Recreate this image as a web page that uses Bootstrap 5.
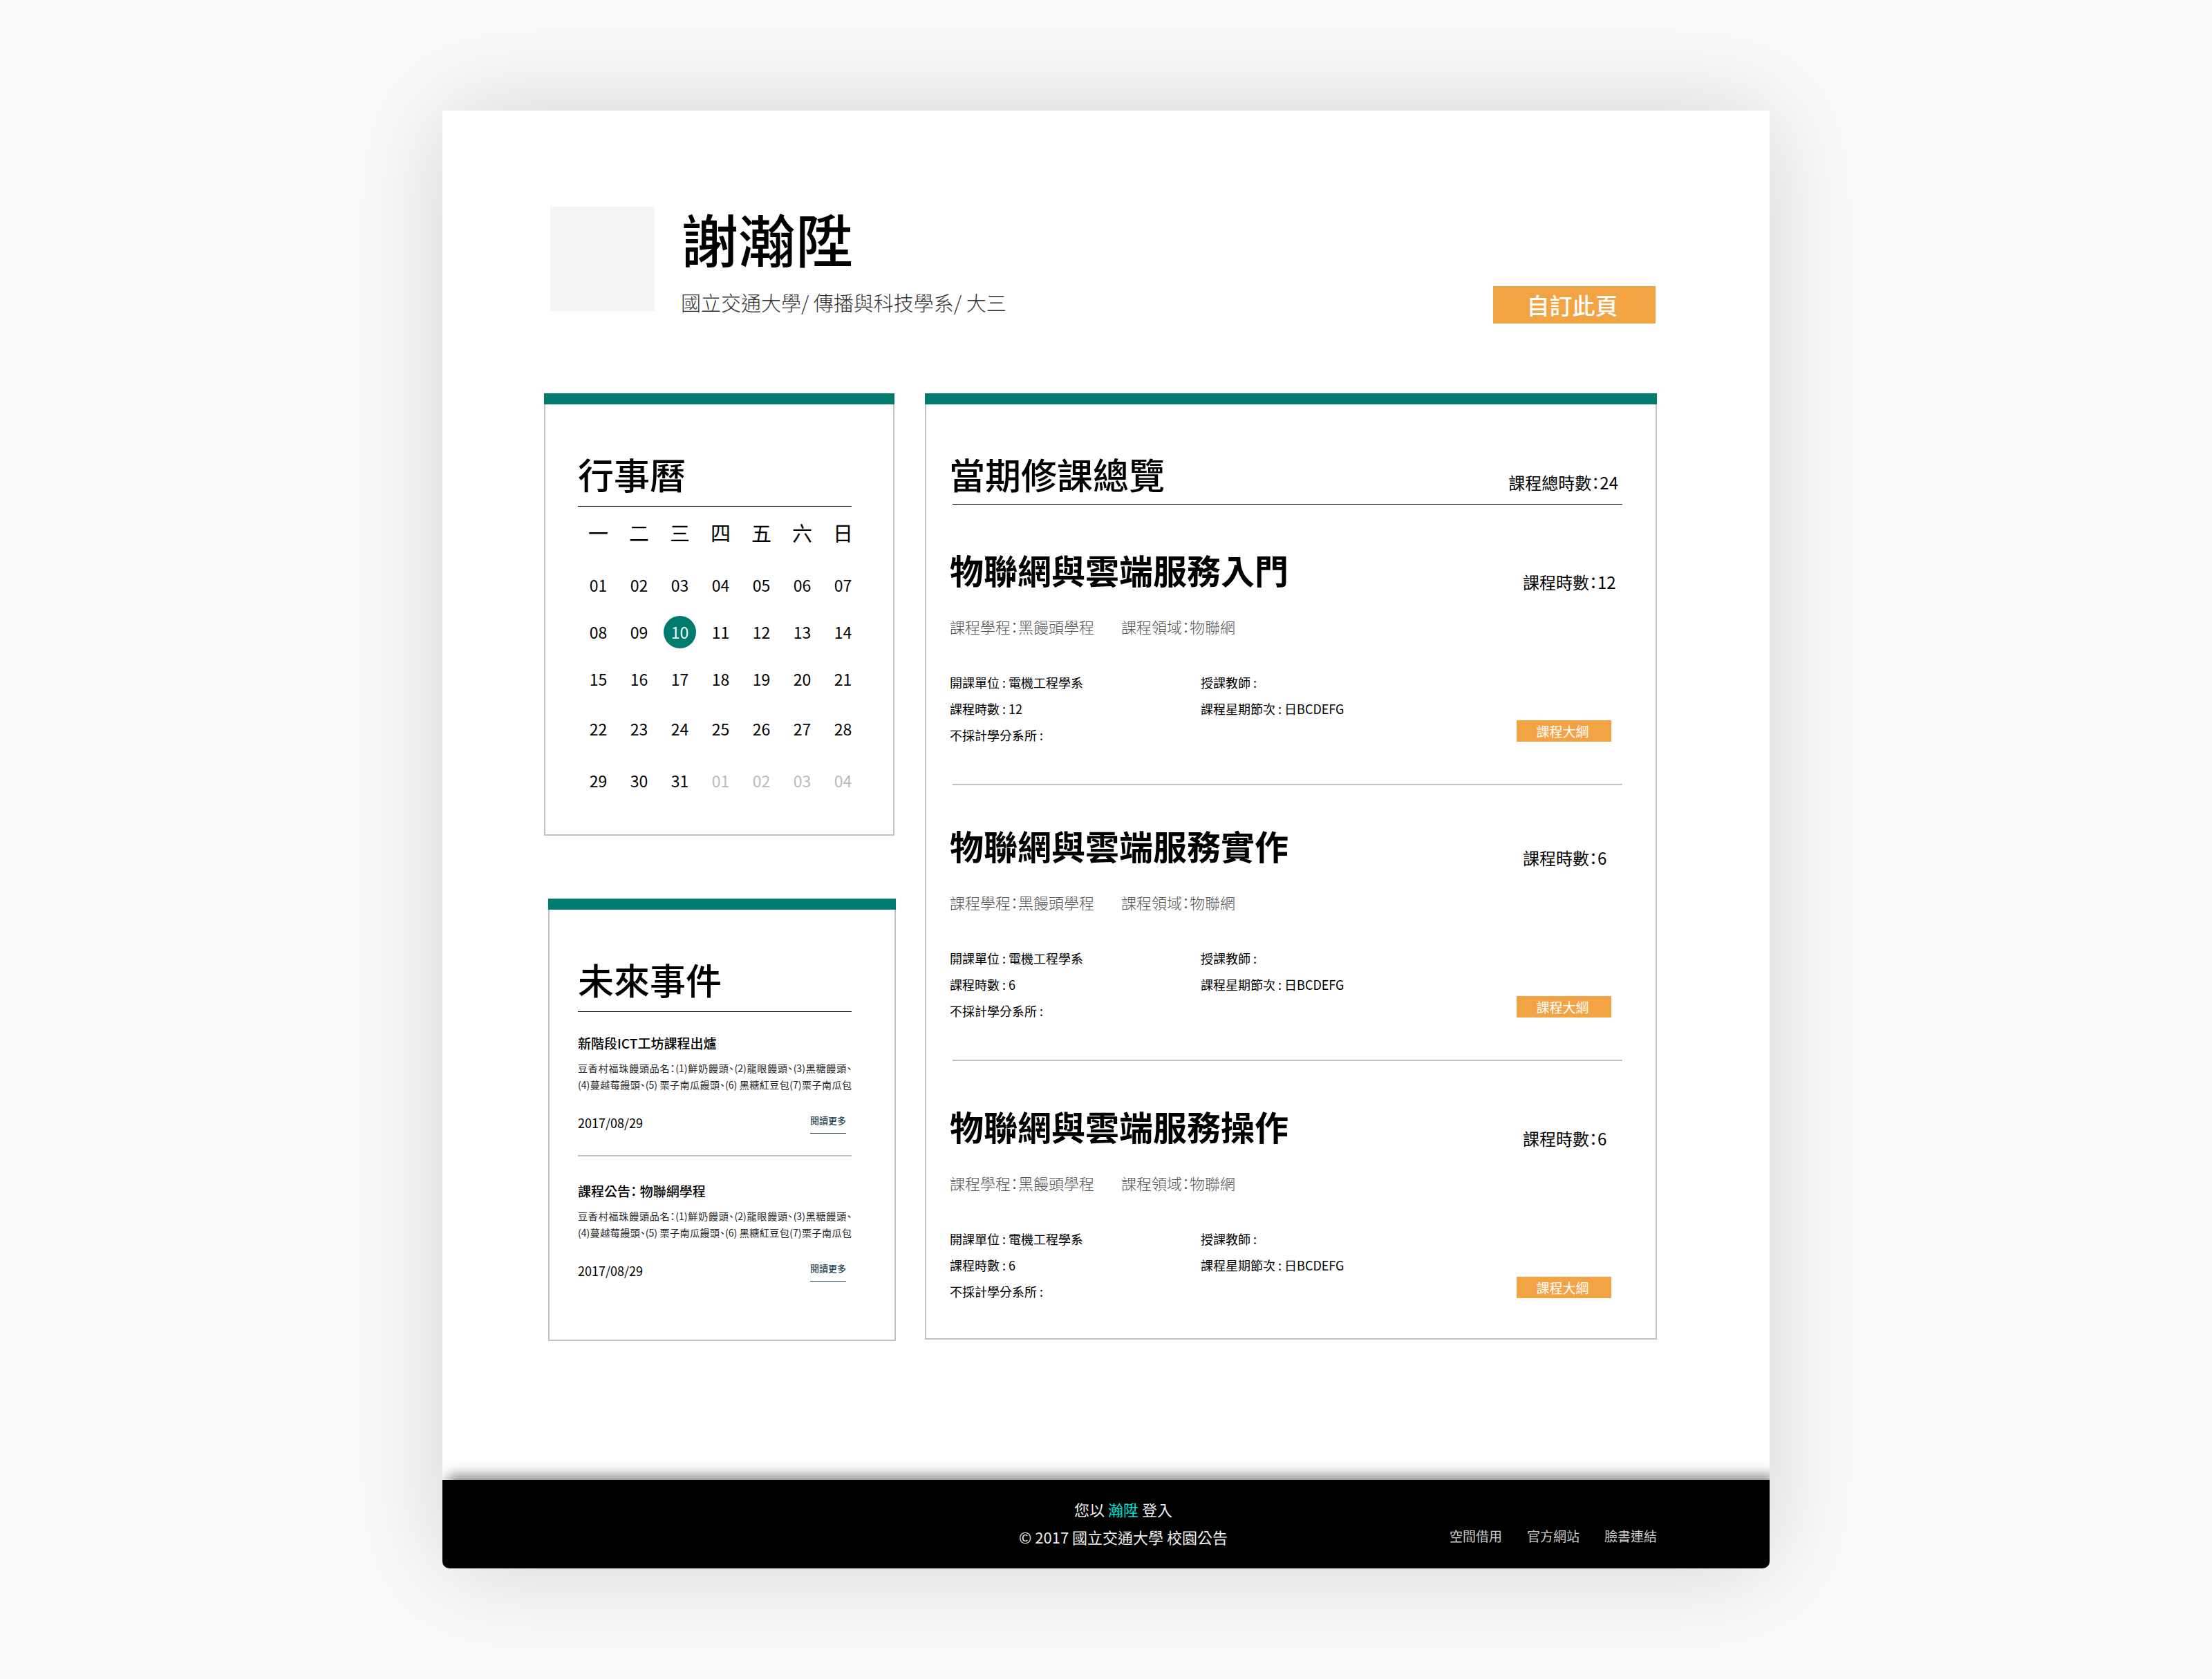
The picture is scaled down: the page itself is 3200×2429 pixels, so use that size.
<!DOCTYPE html>
<html lang="zh-Hant">
<head>
<meta charset="utf-8">
<meta name="viewport" content="width=device-width, initial-scale=1">
<title>校園公告</title>
<link rel="stylesheet" href="https://cdn.jsdelivr.net/npm/bootstrap@5.3.0/dist/css/bootstrap.min.css">
<style>
  :root { --teal: #007b6e; --amber: #f2a444; --hair: #c2c2c2; }
  body { background: #fafafa; color: #000; padding: 160px 20%; font-family: "Noto Sans CJK TC", "Noto Sans", sans-serif; font-feature-settings: "palt"; }
  .sheet { background: #fff; border-radius: 0 0 10px 10px; box-shadow: 0 0 150px rgba(0,0,0,.16); overflow: hidden; }
  .sheet-main { padding: 139px 163px 201px 147px; }
  .profile { padding: 0 2px 0 9px; gap: 38px; }
  .avatar { width: 151px; height: 151px; background: #f4f4f4; }
  .person { font-size: 83px; line-height: 90px; font-weight: 500; }
  .school { font-size: 29px; line-height: 40px; color: #333; margin-top: 28px; font-weight: 300; }
  .btn-amber { --bs-btn-color: #fff; --bs-btn-bg: var(--amber); --bs-btn-hover-color: #fff; --bs-btn-hover-bg: #e3922e; --bs-btn-active-bg: #e3922e; --bs-btn-border-radius: 0; --bs-btn-border-width: 0; }
  .btn-page { width: 235px; height: 54px; font-size: 33px; line-height: 52px; padding: 0 6px 0 0; margin-bottom: -11px; font-weight: 500; }
  .btn-syllabus { width: 137px; height: 31px; font-size: 19px; line-height: 31px; padding: 0 4px 0 0; }
  .boards { margin-top: 112px; gap: 42px; }
  .board-side { flex: 0 0 509px; min-width: 0; }
  .board-main { flex: 1 1 0; }
  /* the coloured bar sits on top of the bordered box, over its full width */
  .panel { background: #fff; border: 2px solid var(--hair); border-top: 0; margin-top: 16px; box-shadow: 0 -16px 0 var(--teal); }
  .panel-title { font-size: 52px; line-height: 60px; font-weight: 500; margin: 0; }
  .cal { width: 507px; height: 624px; padding: 71px 60px 0 47px; }
  .panel-head { border-bottom: 1px solid #111; padding-bottom: 16px; }
  .cal-wrap { margin-right: -17px; }
  .cal table { width: 100%; table-layout: fixed; text-align: center; font-size: 23px; line-height: 30px; }
  .cal th { font-size: 29px; font-weight: 400; height: 79px; padding: 0 0 5px; }
  .cal td { height: 68px; padding: 0; vertical-align: middle; }
  .cal .late td { height: 75px; }
  .cal .off { color: #bbb; }
  .today { display: flex; width: 47px; height: 47px; margin: auto; border-radius: 50%; background: var(--teal); color: #fff; align-items: center; justify-content: center; }
  .events { margin: 107px 0 0 6px; height: 624px; padding: 71px 62px 0 41px; }
  .event { padding-top: 31px; border-bottom: 2px solid var(--hair); height: 209px; }
  .event + .event { border-bottom: 0; margin-top: 5px; }
  .event h3 { font-size: 19px; line-height: 28px; font-weight: 500; margin: 0 0 10px; }
  .event p { font-size: 14px; line-height: 24px; margin: 0; color: #222; text-align: justify; text-align-last: justify; }
  .event-foot { margin-top: 28px; }
  .event time { font-size: 18px; line-height: 30px; }
  .more { font-size: 13px; line-height: 24px; font-weight: 500; color: #1f4353; text-decoration: none; border-bottom: 1px solid #1f4353; padding-bottom: 6px; margin-right: 8px; }
  .courses { padding: 71px 48px 0 36px; height: 1353px; }
  .courses-head { border-bottom: 1px solid #111; margin-left: 2px; padding-bottom: 13px; }
  .courses-head h2 { margin-left: -5px; }
  .total, .hours { font-size: 24px; line-height: 32px; }
  .total { padding: 0 6px 2px 0; }
  .course { border-bottom: 2px solid var(--hair); margin-left: 2px; height: 406px; padding-top: 64px; }
  .course + .course { height: 399px; padding-top: 57px; }
  .course + .course:last-child { border-bottom: 0; padding-top: 64px; }
  .course-body { margin-left: -4px; }
  .course h3 { font-size: 49px; line-height: 60px; font-weight: 700; margin: 0; }
  .fields { font-size: 22px; line-height: 30px; color: #555; gap: 39px; margin-top: 37px; font-weight: 300; }
  .facts { font-size: 18px; line-height: 38px; margin-top: 47px; }
  .facts-a { width: 363px; }
  .aside-col { width: 153px; padding-top: 32px; }
  .aside-col .hours { padding-left: 9px; margin-bottom: 184px; }
  .foot { position: relative; background: #000; color: #ececec; height: 128px; padding: 22px 163px 0; box-shadow: 8px -6px 18px rgba(0,0,0,.5); }
  .foot-mid { font-size: 22px; line-height: 40px; text-align: center; padding-left: 50px; }
  .foot a { color: #00e5dc; text-decoration: none; }
  .foot .links { gap: 36px; font-size: 19px; line-height: 30px; margin-top: 44px; }
  .foot .links a { color: #ccc; }
  .foot-cell { flex: 1 1 0; }
</style>
</head>
<body>
<div class="sheet">
  <main class="sheet-main">
    <header class="profile d-flex align-items-start">
      <div class="avatar"></div>
      <div class="flex-grow-1">
        <h1 class="person mb-0">謝瀚陞</h1>
        <div class="school">國立交通大學/ 傳播與科技學系/ 大三</div>
      </div>
      <button type="button" class="btn btn-amber btn-page align-self-end">自訂此頁</button>
    </header>

    <div class="boards d-flex align-items-start">
      <div class="board-side">
        <section class="panel cal">
          <div class="panel-head"><h2 class="panel-title">行事曆</h2></div>
          <div class="cal-wrap">
            <table>
              <thead><tr><th>一</th><th>二</th><th>三</th><th>四</th><th>五</th><th>六</th><th>日</th></tr></thead>
              <tbody>
                <tr><td>01</td><td>02</td><td>03</td><td>04</td><td>05</td><td>06</td><td>07</td></tr>
                <tr><td>08</td><td>09</td><td><span class="today">10</span></td><td>11</td><td>12</td><td>13</td><td>14</td></tr>
                <tr><td>15</td><td>16</td><td>17</td><td>18</td><td>19</td><td>20</td><td>21</td></tr>
                <tr class="late"><td>22</td><td>23</td><td>24</td><td>25</td><td>26</td><td>27</td><td>28</td></tr>
                <tr class="late"><td>29</td><td>30</td><td>31</td><td class="off">01</td><td class="off">02</td><td class="off">03</td><td class="off">04</td></tr>
              </tbody>
            </table>
          </div>
        </section>

        <section class="panel events">
          <div class="panel-head"><h2 class="panel-title">未來事件</h2></div>
          <article class="event">
            <h3>新階段ICT工坊課程出爐</h3>
            <p>豆香村福珠饅頭品名：(1)鮮奶饅頭、(2)龍眼饅頭、(3)黑糖饅頭、<br>(4)蔓越莓饅頭、(5) 栗子南瓜饅頭、(6) 黑糖紅豆包(7)栗子南瓜包</p>
            <div class="event-foot d-flex justify-content-between align-items-start"><time>2017/08/29</time><a class="more" href="#">閱讀更多</a></div>
          </article>
          <article class="event">
            <h3>課程公告： 物聯網學程</h3>
            <p>豆香村福珠饅頭品名：(1)鮮奶饅頭、(2)龍眼饅頭、(3)黑糖饅頭、<br>(4)蔓越莓饅頭、(5) 栗子南瓜饅頭、(6) 黑糖紅豆包(7)栗子南瓜包</p>
            <div class="event-foot d-flex justify-content-between align-items-start"><time>2017/08/29</time><a class="more" href="#">閱讀更多</a></div>
          </article>
        </section>
      </div>

      <section class="panel courses board-main">
        <div class="courses-head d-flex justify-content-between align-items-end">
          <h2 class="panel-title">當期修課總覽</h2>
          <div class="total">課程總時數：24</div>
        </div>

        <article class="course">
          <div class="course-body d-flex justify-content-between">
            <div>
              <h3>物聯網與雲端服務入門</h3>
              <div class="fields d-flex"><span>課程學程：黑饅頭學程</span><span>課程領域：物聯網</span></div>
              <div class="facts d-flex">
                <div class="facts-a">開課單位 : 電機工程學系<br>課程時數 : 12<br>不採計學分系所 :</div>
                <div>授課教師 :<br>課程星期節次 : 日BCDEFG</div>
              </div>
            </div>
            <div class="aside-col"><div class="hours">課程時數：12</div><button type="button" class="btn btn-amber btn-syllabus d-block">課程大綱</button></div>
          </div>
        </article>

        <article class="course">
          <div class="course-body d-flex justify-content-between">
            <div>
              <h3>物聯網與雲端服務實作</h3>
              <div class="fields d-flex"><span>課程學程：黑饅頭學程</span><span>課程領域：物聯網</span></div>
              <div class="facts d-flex">
                <div class="facts-a">開課單位 : 電機工程學系<br>課程時數 : 6<br>不採計學分系所 :</div>
                <div>授課教師 :<br>課程星期節次 : 日BCDEFG</div>
              </div>
            </div>
            <div class="aside-col"><div class="hours">課程時數：6</div><button type="button" class="btn btn-amber btn-syllabus d-block">課程大綱</button></div>
          </div>
        </article>

        <article class="course">
          <div class="course-body d-flex justify-content-between">
            <div>
              <h3>物聯網與雲端服務操作</h3>
              <div class="fields d-flex"><span>課程學程：黑饅頭學程</span><span>課程領域：物聯網</span></div>
              <div class="facts d-flex">
                <div class="facts-a">開課單位 : 電機工程學系<br>課程時數 : 6<br>不採計學分系所 :</div>
                <div>授課教師 :<br>課程星期節次 : 日BCDEFG</div>
              </div>
            </div>
            <div class="aside-col"><div class="hours">課程時數：6</div><button type="button" class="btn btn-amber btn-syllabus d-block">課程大綱</button></div>
          </div>
        </article>
      </section>
    </div>
  </main>

  <footer class="foot d-flex">
    <div class="foot-cell"></div>
    <div class="foot-mid">您以 <a href="#">瀚陞</a> 登入<br>© 2017 國立交通大學 校園公告</div>
    <nav class="foot-cell links d-flex justify-content-end"><a href="#">空間借用</a><a href="#">官方網站</a><a href="#">臉書連結</a></nav>
  </footer>
</div>
<script src="https://cdn.jsdelivr.net/npm/bootstrap@5.3.0/dist/js/bootstrap.bundle.min.js"></script>
</body>
</html>
